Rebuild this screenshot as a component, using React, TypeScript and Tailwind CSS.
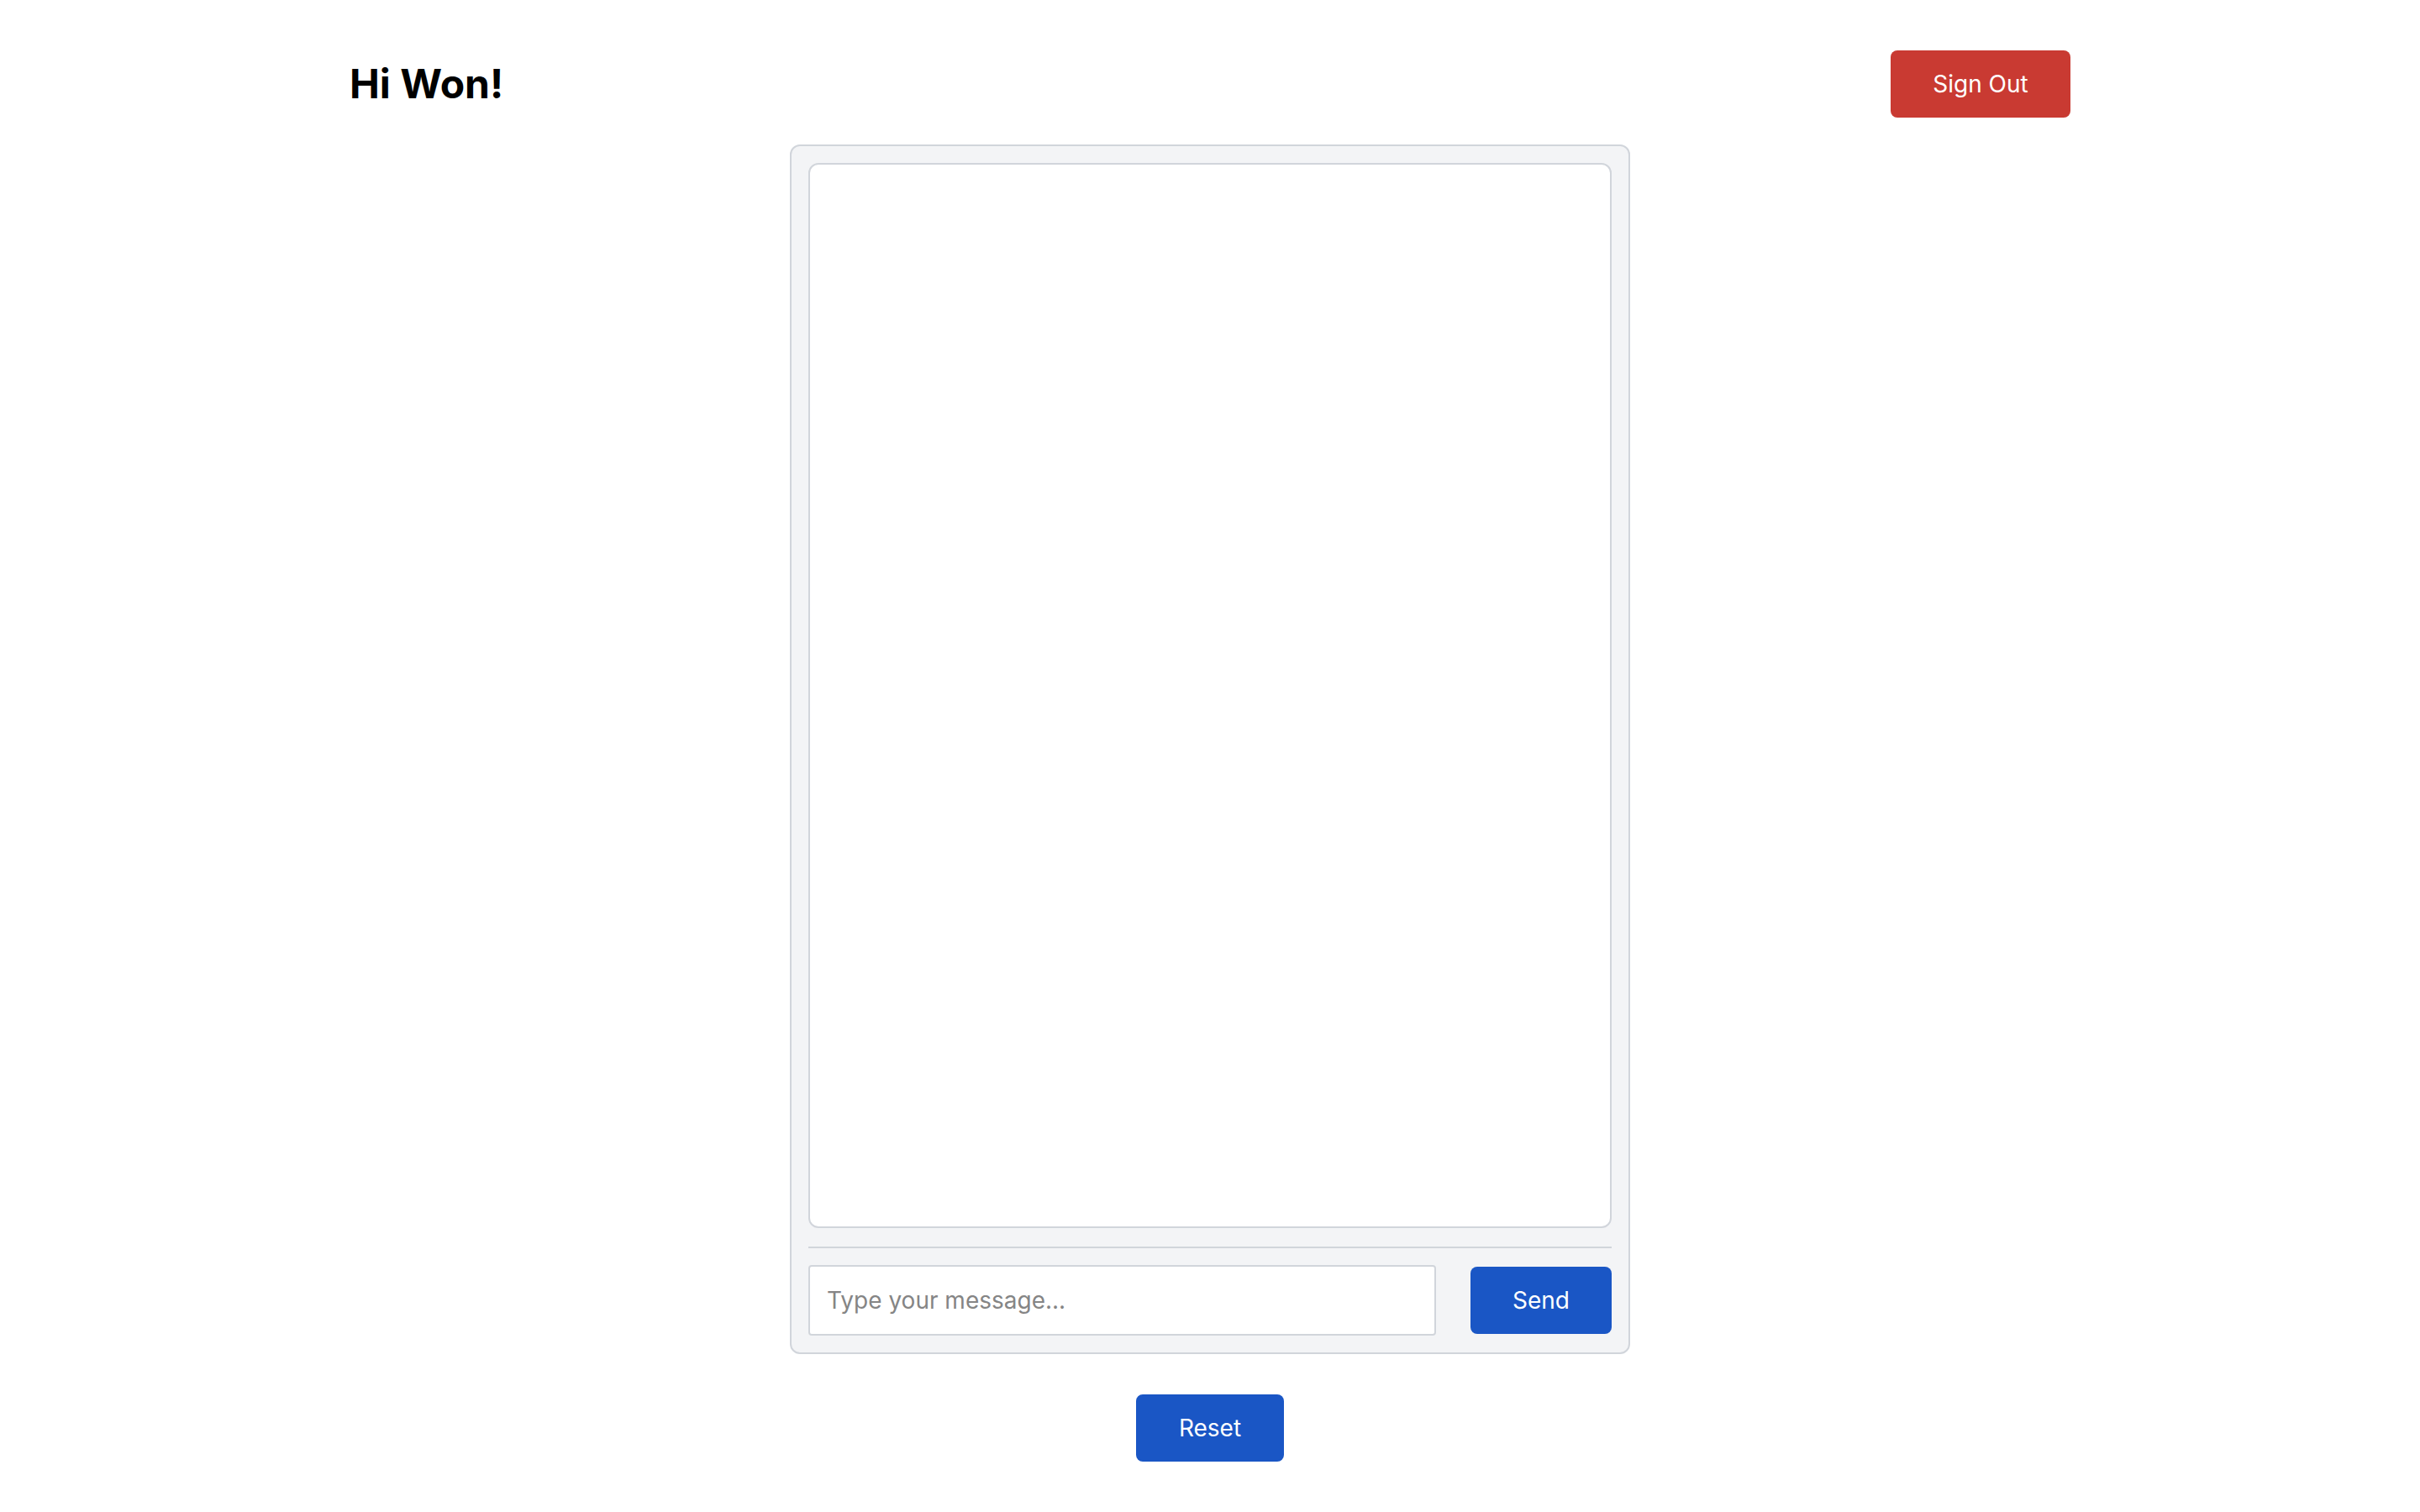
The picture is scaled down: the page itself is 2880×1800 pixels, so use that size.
import { useState } from 'react';

export default function App() {
  const [message, setMessage] = useState('');

  return (
    <div className="min-h-screen bg-white font-['Inter',sans-serif] text-black">
      <header className="mx-auto flex h-[80px] w-[2048px] items-center justify-between mt-[60px]">
        <h1 className="text-[48px] font-bold leading-none">Hi Won!</h1>
        <button className="flex h-[80px] w-[214px] items-center justify-center rounded-[8px] bg-[#c93a32] text-[28px] text-white">
          Sign Out
        </button>
      </header>

      <main className="mt-[32px] flex flex-col items-center">
        <div className="flex w-[1000px] flex-col rounded-[12px] border-2 border-[#d1d5db] bg-[#f3f4f6] p-[20px]">
          <div className="h-[1268px] rounded-[12px] border-2 border-[#d1d5db] bg-white" />
          <div className="mt-[22px] flex items-center gap-[41px] border-t-2 border-[#d1d5db] pt-[20px]">
            <input
              value={message}
              onChange={(e) => setMessage(e.target.value)}
              placeholder="Type your message..."
              className="h-[84px] flex-1 rounded-[4px] border-2 border-[#d1d5db] bg-white px-[20px] text-[28px] outline-none placeholder:text-[#858585]"
            />
            <button className="flex h-[80px] w-[168px] items-center justify-center rounded-[8px] bg-[#1a56c5] text-[28px] text-white">
              Send
            </button>
          </div>
        </div>

        <button className="mt-[48px] flex h-[80px] w-[176px] items-center justify-center rounded-[8px] bg-[#1a56c5] text-[28px] text-white">
          Reset
        </button>
      </main>
    </div>
  );
}
